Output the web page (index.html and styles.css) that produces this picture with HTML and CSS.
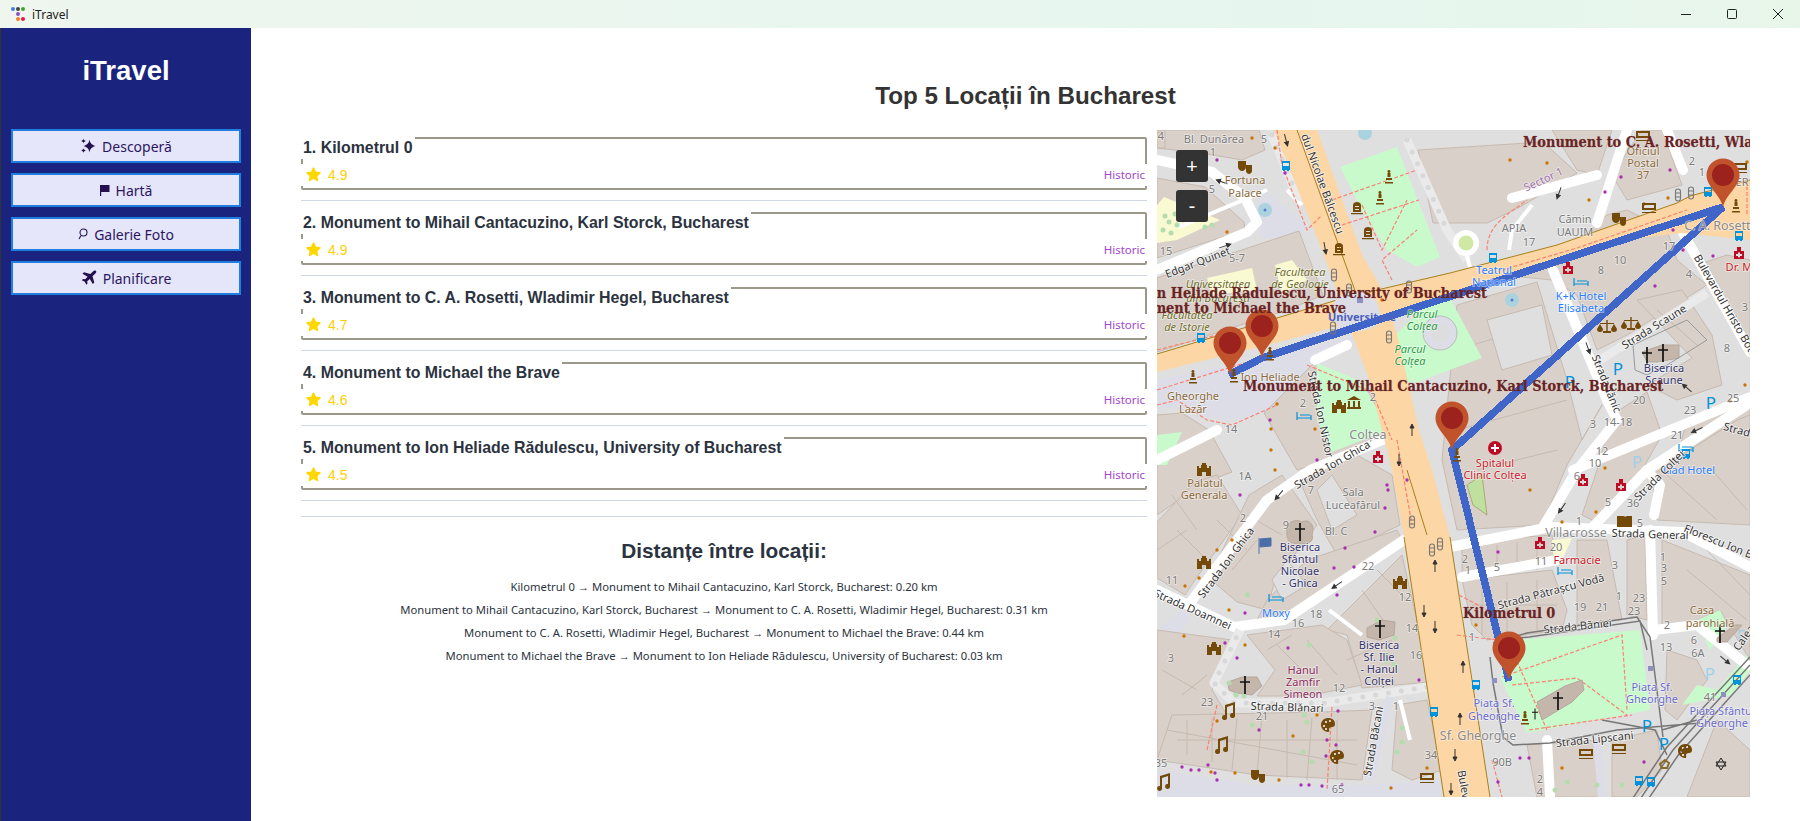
FILE: index.html
```html
<!DOCTYPE html>
<html lang="ro">
<head>
  <meta charset="UTF-8" />
  <meta name="viewport" content="width=device-width, initial-scale=1" />
  <title>iTravel</title>
  <link rel="stylesheet" href="styles.css">
</head>
<body>

<header class="titlebar">
  <svg class="app-icon" width="16" height="16" viewBox="0 0 16 16">
    <rect width="16" height="16" fill="#f4f4f4"/>
    <circle cx="3" cy="3" r="2" fill="#3a80e0"/>
    <circle cx="8" cy="3" r="2" fill="#444"/>
    <circle cx="13" cy="3" r="2" fill="#3aa820"/>
    <circle cx="8" cy="8" r="2" fill="#9050c0"/>
    <circle cx="8" cy="13" r="2" fill="#f08020"/>
    <circle cx="13" cy="13" r="2" fill="#e81840"/>
  </svg>
  <span class="app-name">iTravel</span>
  <div class="win-controls">
    <svg width="10" height="10" viewBox="0 0 10 10"><path d="M0 5.5h10" stroke="#222"/></svg>
    <svg width="10" height="10" viewBox="0 0 10 10"><rect x=".5" y=".5" width="9" height="9" rx="1" fill="none" stroke="#222"/></svg>
    <svg width="10" height="10" viewBox="0 0 10 10"><path d="M0 0l10 10M10 0L0 10" stroke="#222"/></svg>
  </div>
</header>

<div class="app">
  <aside class="sidebar">
    <h1>iTravel</h1>
    <nav class="side-nav">
      <button>
        <svg width="16" height="16" viewBox="0 0 16 16"><path d="M9.500 1.500c.6 3.500 1.800 5 5.800 6.500-4 1.500-5.200 3-5.800 6.500-.6-3.500-1.800-5-5.800-6.500 4-1.500 5.200-3 5.800-6.500zM3.500 .5c.2 1.400.8 2 2.300 2.500-1.500.5-2.100 1.100-2.300 2.500-.2-1.400-.8-2-2.300-2.500 1.500-.5 2.100-1.100 2.300-2.500zM3.500 10c.2 1.400.8 2 2.300 2.500-1.500.5-2.100 1.100-2.300 2.500-.2-1.400-.8-2-2.300-2.500 1.500-.5 2.100-1.100 2.300-2.500z" fill="#24104f"/></svg>
        Descoperă
      </button>
      <button>
        <svg width="10" height="12" viewBox="0 0 10 12"><path d="M0 1h9.500v7H1.200v4H0z" fill="#24104f"/></svg>
        Hartă
      </button>
      <button>
        <svg width="10" height="12" viewBox="0 0 10 12"><circle cx="5.500" cy="4.500" r="3.500" fill="none" stroke="#24104f" stroke-width="1.100"/><path d="M3 7.500L1 11" stroke="#24104f" stroke-width="1.100"/></svg>
        Galerie Foto
      </button>
      <button>
        <svg width="16" height="16" viewBox="0 0 16 16"><path d="M15 1c-1-.8-2.200-.4-3 .4L9.300 4 3 2.200 1.500 3.700 6.600 6.700 4.200 9.300 2 9 .8 10.200l3 1.500 1.500 3 1.200-1.200-.3-2.200 2.600-2.400 3 5.100 1.500-1.500L11.500 6.200l2.800-2.700c.8-.8 1.400-1.700.7-2.500z" fill="#24104f"/></svg>
        Planificare
      </button>
    </nav>
  </aside>

  <main class="main">
    <h2 class="page-title">Top 5 Locații în Bucharest</h2>
    <div class="content">
      <section class="left-col">
        <ul class="loc-list">
          <li class="loc-item">
            <div class="loc-card">
              <h3>1. Kilometrul 0</h3>
              <div class="loc-row">
                <span class="rating"><svg class="star" viewBox="0 0 16 16"><path d="M8 2l1.800 3.900 4.200.5-3.100 2.900.8 4.200L8 11.400l-3.700 2.100.8-4.200L2 6.400l4.200-.5z"/></svg>4.9</span>
                <span class="tag">Historic</span>
              </div>
            </div>
          </li>
          <li class="loc-item">
            <div class="loc-card">
              <h3>2. Monument to Mihail Cantacuzino, Karl Storck, Bucharest</h3>
              <div class="loc-row">
                <span class="rating"><svg class="star" viewBox="0 0 16 16"><path d="M8 2l1.800 3.900 4.200.5-3.100 2.900.8 4.200L8 11.400l-3.700 2.100.8-4.200L2 6.400l4.200-.5z"/></svg>4.9</span>
                <span class="tag">Historic</span>
              </div>
            </div>
          </li>
          <li class="loc-item">
            <div class="loc-card">
              <h3>3. Monument to C. A. Rosetti, Wladimir Hegel, Bucharest</h3>
              <div class="loc-row">
                <span class="rating"><svg class="star" viewBox="0 0 16 16"><path d="M8 2l1.800 3.900 4.200.5-3.100 2.900.8 4.200L8 11.400l-3.700 2.100.8-4.200L2 6.400l4.200-.5z"/></svg>4.7</span>
                <span class="tag">Historic</span>
              </div>
            </div>
          </li>
          <li class="loc-item">
            <div class="loc-card">
              <h3>4. Monument to Michael the Brave</h3>
              <div class="loc-row">
                <span class="rating"><svg class="star" viewBox="0 0 16 16"><path d="M8 2l1.800 3.900 4.200.5-3.100 2.900.8 4.200L8 11.400l-3.700 2.100.8-4.200L2 6.400l4.200-.5z"/></svg>4.6</span>
                <span class="tag">Historic</span>
              </div>
            </div>
          </li>
          <li class="loc-item">
            <div class="loc-card">
              <h3>5. Monument to Ion Heliade Rădulescu, University of Bucharest</h3>
              <div class="loc-row">
                <span class="rating"><svg class="star" viewBox="0 0 16 16"><path d="M8 2l1.800 3.900 4.200.5-3.100 2.900.8 4.200L8 11.400l-3.700 2.100.8-4.200L2 6.400l4.200-.5z"/></svg>4.5</span>
                <span class="tag">Historic</span>
              </div>
            </div>
          </li>
        </ul>
        <div class="distances">
          <h2>Distanțe între locații:</h2>
          <p>Kilometrul 0 → Monument to Mihail Cantacuzino, Karl Storck, Bucharest: 0.20 km</p>
          <p>Monument to Mihail Cantacuzino, Karl Storck, Bucharest → Monument to C. A. Rosetti, Wladimir Hegel, Bucharest: 0.31 km</p>
          <p>Monument to C. A. Rosetti, Wladimir Hegel, Bucharest → Monument to Michael the Brave: 0.44 km</p>
          <p>Monument to Michael the Brave → Monument to Ion Heliade Rădulescu, University of Bucharest: 0.03 km</p>
        </div>
      </section>

      <div class="map">
        <svg class="map-svg" width="593" height="667" viewBox="0 0 593 667">
          <defs>
            <g id="pin"><path d="M0 0C-3-13-16.500-20-16.500-32A16.500 16.500 0 1 1 16.500-32C16.500-20 3-13 0 0z" fill="#c1532c"/><circle cy="-32" r="11" fill="#9b221d"/></g>
            <path id="cross" d="M0-9V9M-5-3H5" stroke="#111" stroke-width="1.700" fill="none"/>
            <path id="castle" d="M-7 6V-4h2v2h2v-3h1v-2h4v2h1v3h2v-2h2V6H2V2h-4v4z" fill="#734a08"/>
            <path id="temple" d="M-7-3L0-7l7 4zM-6-2h2v6h-2zM-1-2h2v6h-2zM4-2h2v6H4zM-7 4H7v2H-7z" fill="#734a08"/>
            <path id="note" d="M-5 5a2.500 2.500 0 1 0 2 2V-3l6-2V3a2.500 2.500 0 1 0 2 2V-8l-10 3z" fill="#734a08"/>
            <path id="palette" fill-rule="evenodd" d="M0-7C-5-7-7-3-7 0s3 7 7 7c2 0 1-2 1-3s1-2 3-2 3-1 3-3c0-4-3-6-7-6zM-3-4h2v2h-2zM1-5h2v2H1zM-5 0h2v2h-2zM-3 3h2v2h-2z" fill="#734a08"/>
            <path id="masks" d="M-7-5H1v6c0 2-2 4-4 4S-7 3-7 1zM1-1H7V5C7 7 5 8 4 8S1 7 1 5z" fill="#734a08"/>
            <path id="money" d="M-7-4H7V3H-7zM-5-2v3H5v-3zM-7 5H7v1H-7z" fill="#734a08"/>
            <path id="bust" d="M0-7a1.500 1.500 0 1 1-.1 0zM-1.500-4h3v4h-3zM-3 1H3V3H-3zM-4 5H4V6.500H-4z" fill="#734a08"/>
            <path id="grave" d="M-4 4V-3C-4-5-2-6 0-6S4-5 4-3V4zM-2-2v1H2v-1zM-2 1v1H2V1zM-6 5H6V6.300H-6z" fill="#734a08"/>
            <path id="scales" d="M-.7-7H.7V4H4V6H-4V4H-.7zM-7-4H7v1H-7zM-7-3l-3 5a3 3 0 0 0 6 0zM7-3L4 2a3 3 0 0 0 6 0z" fill="#734a08"/>
            <path id="hotel" d="M-7-4V4M7-1V4M-7 2H7M-4-1H6" stroke="#0092da" stroke-width="1.200" fill="none"/>
            <path id="bus" d="M-4-5H4V4H3V5H1V4H-1V5H-3V4H-4zM-3-3V0H3V-3z" fill="#0092da"/>
            <path id="plus" d="M-5-2H-2V-6H2V-2H5V6H-5zM-1 -.500v1.500h-2v2h2v1.500h2V3H3V1H1v-1.500z" fill="#bd0a25"/>
            <g id="lights" fill="none" stroke="#777" stroke-width="1.100"><rect x="-2.500" y="-6" width="5" height="12" rx="2.500"/><path d="M-2.500-2h5M-2.500 2h5"/></g>
            <path id="arrow" d="M0 6V-2M-2-2H2L0 -6z" stroke="#333" fill="#333"/>
          </defs>

          <rect class="ground" width="593" height="667"/>

          <!-- площади и пешеходные зоны -->
          <path class="plaza" d="M0 250L120 225 200 205 160 240 125 270C105 290 70 295 45 285 30 280 10 275 0 280z"/>
          <path class="plaza" d="M0 640L100 655 215 655 287 650 300 667H0zM0 500L30 475 32 490 10 520 0 535z"/>
          <path class="plaza" d="M110 62L150 95 140 110 105 108 95 75z"/>

          <!-- кварталы -->
          <g class="bld">
            <path d="M8 0H102L108 20 85 30 50 24 0 18V0z"/>
            <path d="M0 48L48 57 87 92 88 100 0 128z"/>
            <path d="M0 148L142 101 166 165 130 180 0 222z"/>
            <path d="M0 285L25 283 52 300 75 342 48 352 0 385z"/>
            <path d="M107 283L157 233 213 263 233 310 140 340z"/>
            <path d="M0 392L38 352 60 345 85 385 40 447 28 465 0 448z"/>
            <path d="M92 365L125 345 160 395 118 450 110 480 80 472 52 448z"/>
            <path d="M140 345L200 325 235 345 243 395 180 425 160 390z"/>
            <path d="M150 430L240 400 245 410 195 440 130 485 100 490 110 470z"/>
            <path d="M170 500L245 425 262 500 272 552 205 558 190 505z"/>
            <path d="M0 500L75 510 55 560 70 585 20 590 0 630z"/>
            <path d="M90 505L165 495 190 510 205 555 150 566 100 566 118 540z"/>
            <path d="M15 585L165 582 215 580 205 650 100 645 0 630z"/>
            <path d="M240 575L270 570 285 640 255 650 235 640z"/>
            <path d="M261 20L386 12 420 43 363 77 330 93 276 93z"/>
            <path d="M395 0L455 0 440 45 420 40z"/>
            <path d="M485 0L505 0 525 55 470 70 455 45z"/>
            <path d="M345 145L390 125 405 125 450 85 470 80 510 100 520 130 550 155 470 205 440 220 420 165 395 150z"/>
            <path d="M300 175L380 152 410 250 425 310 445 275 410 335 385 395 300 400 285 330z"/>
            <path d="M540 135L570 125 593 130V215L570 175z"/>
            <path d="M530 290L593 275V385L540 380 505 385z"/>
            <path d="M480 170L525 160 555 205 565 255 520 270 490 255 535 228z"/>
            <path d="M455 285L490 262 505 305 485 340 445 395 425 385 440 340z"/>
            <path d="M495 345L525 325 580 290 593 285V395L500 390z"/>
            <path d="M305 412L395 405 400 430 305 445z"/>
            <path d="M305 450L395 440 410 480 405 500 330 510 315 495z"/>
            <path d="M420 410L450 410 465 490 420 495z"/>
            <path d="M470 410L488 405 490 490 470 485z"/>
            <path d="M505 410L593 445V530L563 480 540 490 505 500z"/>
            <path d="M510 520L540 530 550 550 520 590 508 580z"/>
            <path d="M560 590L593 620V667H530z"/>
            <path d="M370 615L440 610 445 667H380z"/>
            <path d="M455 610L500 600 505 640 480 667H455z"/>
            <path d="M0 3L8 0 8 18 0 18z"/>
          </g>
          <!-- внутренние линии домов -->
          <path class="bld-lines" d="M30 590V625M55 588V632M80 588L75 640M105 585L100 645M130 590V648M155 588L150 650M180 590V650M20 610H200M10 600L200 635M25 565L50 545M5 540L40 560M120 515L145 540M150 510L180 545M205 460L240 510M220 440L250 470M320 420V445M340 415V445M360 412V442M380 410V440M325 455V505M350 452V505M380 450V500M315 475H400M540 410L593 465M530 440L590 490M60 390L90 420M20 400L50 430M15 365L40 400M0 420L30 400M110 520L135 505M190 530L235 510M90 385L125 405M75 440L100 410M510 345L560 390M555 340L590 380M500 180L540 215M315 215L385 195M300 300L410 270M320 340L400 320"/>
          <path class="yard" d="M330 190L385 175 395 225 345 240z"/>
          <path class="yard" d="M160 360L175 345 200 385 175 400z"/>
          <path class="yard" d="M115 450L130 430 150 455 125 470z"/>
          <path class="pale" d="M7 67L63 90 20 110 0 113V75zM50 148L95 138 100 160 55 165zM118 135L135 130 150 150 125 165zM395 410L415 408 405 430 397 430z"/>

          <!-- парки -->
          <g class="park">
            <path d="M183 37L240 17 283 127 260 137 230 120 205 80z"/>
            <path d="M238 205L270 175 293 168 325 228 260 252 248 252z"/>
            <path d="M160 233L205 252 232 300 175 322 160 290z"/>
            <path d="M356 510L483 500 493 580 370 603 343 547z"/>
            <path d="M0 305L25 302 10 335 0 335zM540 490L563 480 570 495 553 520zM590 525L560 560 540 555 525 575 575 565 593 540z"/>
            <path d="M580 70L593 65V85L575 85z"/>
          </g>
          <path class="park-dark" d="M207 208L225 205 240 250 220 240zM185 130L200 145 202 150 185 160zM248 160L260 155 245 175zM310 355L325 345 330 385 316 375z"/>
          <circle cx="283" cy="203" r="17" class="ring"/>
          <circle cx="283" cy="203" r="9" fill="#ddd"/>

          <!-- улицы -->
          <g class="road">
            <path d="M0 30L55 42 88 68 100 92 90 102 0 140"/>
            <path d="M33 473L110 370 153 340 233 307"/>
            <path d="M0 460L77 497 127 490 247 410"/>
            <path d="M293 417L393 397 526 402 593 437"/>
            <path d="M526 103L593 222"/>
            <path d="M416 340L593 267"/>
            <path d="M436 397L490 340 593 273"/>
            <path d="M386 397L420 340 460 290"/>
            <path d="M396 140L450 270 460 290"/>
            <path d="M440 93L470 0"/>
            <path d="M510 0L526 40"/>
            <path d="M493 400L496 505"/>
            <path d="M497 385L503 355 490 340"/>
            <path d="M305 447L400 430"/>
            <path d="M355 68L440 45"/>
            <path d="M0 330L60 300"/>
            <path d="M158 230L190 215"/>
            <path d="M497 500L540 495 590 535"/>
            <path d="M390 610L393 667"/>
          </g>
          <path class="road-thin" d="M172 480L205 505M243 570L253 610M130 60L145 75M22 97L110 60M352 120L355 100 375 75"/>
          <g class="foot">
            <path d="M270 557L167 573 77 573 57 553 83 500"/>
            <path d="M443 230L550 163"/>
            <path d="M115 5L140 65 165 75M250 10L290 100 310 130"/>
          </g>
          <g class="foot-dots">
            <path d="M270 557L167 573 77 573 57 553 83 500"/>
            <path d="M115 5L140 65"/>
            <path d="M250 10L290 100"/>
          </g>
          <path class="lilac-road" d="M233 567L213 650M440 610L445 667"/>
          <circle cx="309" cy="113" r="13" fill="#fff"/>
          <circle cx="309" cy="113" r="7.500" fill="#cfe8a4"/>
          <path class="road-thin" d="M310 126L315 145"/>

          <!-- магистрали -->
          <path class="trunk-edge" d="M117 0L160 0 205 125 230 168 240 205 262 300 275 340 293 407 333 667H287L247 407 235 340 212 250 190 190 165 120z"/>
          <path class="trunk" d="M0 224L130 185 190 167 293 143 400 115 520 73 533 66 593 50V110L525 103 480 108 293 163 240 180 130 210 0 242z"/>
          <path class="trunk-line" d="M0 224L130 185 190 167 293 143 400 115 520 73 533 66 593 50M140 0L205 180M250 340L270 405M247 407L287 667M293 407L333 667"/>
          <path class="plaza" d="M175 180A18 14 0 0 1 222 180 22 14 0 0 1 178 192z"/>
          <rect x="200" y="167" width="6" height="6" fill="#8f8fc0"/>

          <!-- трамвайные пути -->
          <path class="rail" d="M333 527L336 553 346 607 356 615 393 613 460 600 543 593M336 513L370 503 480 487 493 507 506 607M340 510L372 507 483 491 490 520M476 668L510 617 593 527M484 668L516 620 593 535M492 668L522 624 593 545M445 590L498 600 510 625M505 600L540 590"/>

          <!-- пешеходные дорожки -->
          <path class="path" d="M175 70L260 40M185 95L262 70M205 75L225 120 240 90 250 70M235 150L225 130 260 100M0 220L80 200M0 260L130 220M120 0L125 35 150 100 165 85M345 140L420 118 530 80M330 120C330 95 350 85 370 70M0 275L20 270 50 290 75 295 120 275M150 235L215 262 235 310M345 547L465 505 470 580M355 555L420 548 470 585M372 600L475 585M355 520L390 600M302 465L340 485M300 505L340 510M590 50V85M335 630L345 667M240 310L255 395M60 575L50 620M175 577L170 660"/>

          <!-- церкви -->
          <path class="church" d="M130 402C128 393 138 388 145 392 153 388 158 396 155 405 158 412 148 416 142 413 134 415 129 410 130 402z"/>
          <path class="church" d="M210 498L225 490 238 492 237 505 222 510 210 507z"/>
          <path class="church" d="M71 552L85 547 100 547 105 556 95 565 80 563 72 560z"/>
          <path class="church" d="M380 572L408 556 425 550 427 560 415 572 385 590z"/>
          <path class="church" d="M485 222L505 215 522 215 522 228 500 232 490 232z"/>
          <path class="church" d="M560 508L578 495 585 495 570 512 560 512z"/>
          <path class="wall" d="M476 215L530 190 550 210 510 235 490 245 478 240z"/>

          <!-- точки -->
          <path class="dot-p" d="M60 30h0M128 43h0M113 290h0M160 330h0M83 365h0M188 418h0M250 350h0M230 355h0M231 360h0M228 378h0M218 402h0M177 438h0M88 483h0M197 437h0M180 465h0M68 513h0M80 528h0M131 518h0M102 600h0M181 581h0M170 610h0M179 615h0M169 626h0M185 655h0M144 655h0M152 655h0M165 656h0M60 650h0M25 637h0M34 640h0M42 640h0M51 635h0M58 643h0M262 550h0M341 422h0M363 628h0M372 628h0M341 652h0M487 632h0M464 47h0M513 40h0M448 62h0M526 120h0M556 126h0M498 156h0M421 125h0M516 100h0"/>
          <path class="dot-o" d="M95 8h0M118 18h0M70 102h0M225 170h0M120 274h0M114 299h0M158 299h0M114 320h0M118 340h0M164 340h0M75 410h0M60 420h0M42 448h0M28 456h0M72 480h0M88 515h0M27 506h0M60 591h0M136 606h0M160 585h0M54 642h0M78 643h0M178 628h0M209 642h0M234 658h0M122 650h0M270 638h0M405 392h0M373 360h0M439 382h0M319 495h0M448 338h0M339 633h0M405 638h0M588 255h0M573 271h0M590 32h0M511 68h0M487 74h0M432 70h0M390 33h0M353 30h0"/>
          <path class="dot-g" d="M12 92h0M20 95h0M6 100h0M14 103h0M55 95h0M48 97h0M26 90h0M8 86h0M18 84h0M90 465h0M220 490h0M238 508h0M152 515h0M147 585h0M150 592h0M95 595h0M72 553h0M79 565h0M87 566h0M146 622h0M155 632h0M245 598h0M245 612h0M240 622h0M229 531h0M237 535h0M228 525h0M398 660h0M410 652h0M440 655h0M465 655h0"/>

          <!-- маршрут -->
          <polyline class="route" points="352,551 295,320 566,77 105,228 72,245"/>

          <!-- значки -->
          <use href="#castle" x="47" y="340"/><use href="#castle" x="47" y="433"/><use href="#castle" x="57" y="519"/><use href="#castle" x="243" y="453"/><use href="#castle" x="182" y="277"/>
          <use href="#temple" x="197" y="273"/>
          <use href="#note" x="73" y="580"/><use href="#note" x="66" y="614"/><use href="#note" x="8" y="651"/>
          <use href="#palette" x="171" y="595"/><use href="#palette" x="180" y="627"/><use href="#palette" x="528" y="621"/>
          <use href="#masks" x="101" y="645"/><use href="#masks" x="462" y="88"/><use href="#masks" x="88" y="36"/>
          <use href="#money" x="270" y="647"/><use href="#money" x="492" y="77"/><use href="#money" x="429" y="623"/><use href="#money" x="462" y="618"/><use href="#money" x="583" y="37"/><use href="#money" x="486" y="5"/>
          <use href="#bust" x="232" y="47"/><use href="#bust" x="223" y="68"/><use href="#bust" x="36" y="247"/><use href="#bust" x="368" y="588"/><use href="#bust" x="579" y="76"/><use href="#bust" x="113" y="224"/><use href="#bust" x="77" y="246"/><use href="#bust" x="300" y="325"/>
          <use href="#grave" x="200" y="78"/><use href="#grave" x="211" y="103"/><use href="#grave" x="182" y="119"/>
          <use href="#scales" x="450" y="197"/><use href="#scales" x="474" y="194"/>
          <use href="#hotel" x="147" y="286"/><use href="#hotel" x="424" y="152"/><use href="#hotel" x="408" y="441"/><use href="#hotel" x="119" y="468"/><use href="#hotel" x="529" y="318"/>
          <use href="#bus" x="129" y="36"/><use href="#bus" x="44" y="208"/><use href="#bus" x="277" y="582"/><use href="#bus" x="319" y="555"/><use href="#bus" x="580" y="550"/><use href="#bus" x="482" y="651"/><use href="#bus" x="494" y="652"/><use href="#bus" x="336" y="128"/><use href="#bus" x="582" y="106"/><use href="#bus" x="551" y="62"/><use href="#bus" x="529" y="324"/>
          <use href="#plus" x="221" y="327"/><use href="#plus" x="411" y="138"/><use href="#plus" x="582" y="123"/><use href="#plus" x="383" y="413"/><use href="#plus" x="426" y="350"/><use href="#plus" x="464" y="355"/>
          <circle cx="338" cy="318" r="7" fill="#bd0a25"/><path d="M338 314v8M334 318h8" stroke="#fff" stroke-width="2"/>
          <path d="M460 386h6c2 0 2 1 2 1s1-1 2-1h5v11h-15z" fill="#734a08"/>
          <path d="M102 408V424M103 409l11-1v8l-11 1z" stroke="#4b6ea8" fill="#4b6ea8"/>
          <use href="#lights" x="177" y="145"/><use href="#lights" x="192" y="160"/><use href="#lights" x="252" y="157"/><use href="#lights" x="176" y="198"/><use href="#lights" x="232" y="207"/><use href="#lights" x="521" y="65"/><use href="#lights" x="534" y="63"/><use href="#lights" x="255" y="392"/><use href="#lights" x="275" y="420"/><use href="#lights" x="283" y="414"/>
          <use href="#arrow" transform="translate(129 10) rotate(165)"/><use href="#arrow" transform="translate(168 118) rotate(170)"/><use href="#arrow" x="255" y="300"/><use href="#arrow" transform="translate(242 330) rotate(180)"/><use href="#arrow" transform="translate(267 481) rotate(180)"/><use href="#arrow" transform="translate(278 497) rotate(180)"/><use href="#arrow" x="278" y="436"/><use href="#arrow" transform="translate(298 625) rotate(180)"/><use href="#arrow" transform="translate(294 659) rotate(180)"/><use href="#arrow" x="306" y="537"/><use href="#arrow" x="303" y="589"/><use href="#arrow" transform="translate(65 52) rotate(-70)"/><use href="#arrow" transform="translate(68 116) rotate(72)"/><use href="#arrow" transform="translate(122 365) rotate(-140)"/><use href="#arrow" transform="translate(180 455) rotate(-125)"/><use href="#arrow" transform="translate(402 63) rotate(200)"/><use href="#arrow" transform="translate(431 218) rotate(160)"/><use href="#arrow" transform="translate(530 258) rotate(-50)"/><use href="#arrow" transform="translate(540 300) rotate(-115)"/><use href="#arrow" transform="translate(405 378) rotate(-145)"/><use href="#arrow" transform="translate(568 530) rotate(130)"/>
          <use href="#cross" x="143" y="402"/><use href="#cross" x="223" y="499"/><use href="#cross" x="88" y="555"/><use href="#cross" x="401" y="571"/><use href="#cross" x="563" y="504"/><use href="#cross" x="490" y="226"/><use href="#cross" x="506" y="223"/><use href="#cross" transform="translate(378 584) scale(.6)"/>
          <path d="M564 628l5 8h-10zM564 640l5-8h-10z" fill="none" stroke="#222"/>
          <path d="M508 630l4 3-2 5h-5l-2-4z" fill="none" stroke="#8a6a2a" stroke-width="2"/>
          <text class="park-p" x="490" y="602">P</text><text class="park-p" x="507" y="620">P</text><text class="park-p" x="461" y="245">P</text><text class="park-p" x="554" y="279">P</text>
          <text class="park-p light" x="553" y="550">P</text><text class="park-p light" x="585" y="512">P</text><text class="park-p light" x="480" y="338">P</text><text class="park-p" x="413" y="258">P</text>
          <circle cx="355" cy="170" r="7" fill="#aad3df"/><circle cx="355" cy="170" r="1.500" fill="#5a7dd8"/>
          <circle cx="108" cy="80" r="7" fill="#aad3df"/><circle cx="108" cy="80" r="1.500" fill="#5a7dd8"/>
          <circle cx="208" cy="3" r="7" fill="#aad3df"/>
          <rect x="335" y="548" width="5" height="5" fill="#8f8fc0"/><rect x="491" y="536" width="5" height="5" fill="#8f8fc0"/><rect x="564" y="562" width="5" height="5" fill="#8f8fc0"/>

          <!-- подписи карты -->
          <g class="tx">
            <text x="57" y="13">Bl. Dunărea</text><text x="4" y="10">4</text><text x="107" y="13">5</text><text x="56" y="26">1</text><text x="55" y="63">5</text><text x="9" y="125">15</text><text x="80" y="132">5-7</text><text x="74" y="303">14</text><text x="146" y="277">2</text><text x="216" y="271">2</text>
            <text x="88" y="350">1A</text><text x="86" y="392">2</text><text x="129" y="399">9</text><text x="179" y="405">Bl. C</text><text x="196" y="366">Sala</text><text x="196" y="379">Luceafărul</text><text x="154" y="364">7</text><text x="211" y="440">22</text><text x="159" y="488">18</text><text x="141" y="497">16</text><text x="117" y="508">14</text><text x="15" y="454">11</text><text x="248" y="471">12</text><text x="255" y="502">14</text><text x="259" y="529">16</text><text x="182" y="562">12</text><text x="50" y="576">23</text><text x="105" y="590">21</text><text x="14" y="532">3</text><text x="215" y="580">3</text><text x="239" y="580">1</text><text x="4" y="637">35</text><text x="181" y="663">65</text><text x="274" y="629">34</text>
            <text x="399" y="421">20</text><text x="384" y="435">11</text><text x="308" y="433">2</text><text x="311" y="444">1</text><text x="340" y="441">5</text><text x="458" y="439">3</text><text x="506" y="431">1</text><text x="507" y="442">3</text><text x="507" y="455">5</text><text x="462" y="470">1</text><text x="482" y="472">23</text><text x="477" y="485">23</text><text x="423" y="481">19</text><text x="445" y="481">21</text><text x="510" y="499">2</text><text x="509" y="521">13</text><text x="537" y="514">6</text><text x="541" y="527">6A</text><text x="553" y="571">41</text><text x="315" y="511">1</text><text x="345" y="636">90B</text><text x="383" y="653">2</text><text x="383" y="666">4</text><text x="420" y="350">6</text><text x="451" y="376">5</text><text x="476" y="377">36</text><text x="422" y="395">1</text><text x="483" y="397">5</text>
            <text x="535" y="35">2</text><text x="545" y="46">1</text><text x="585" y="56">ER</text><text x="357" y="102">APIA</text><text x="372" y="116">17</text><text x="418" y="93">Cămin</text><text x="418" y="106">UAUIM</text><text x="463" y="134">10</text><text x="444" y="144">8</text><text x="532" y="148">4</text><text x="588" y="181">3</text><text x="512" y="120">17</text><text x="570" y="222">8</text><text x="482" y="274">20</text><text x="533" y="284">23</text><text x="576" y="272">25</text><text x="461" y="296">14-18</text><text x="436" y="298">3</text><text x="520" y="309">21</text><text x="445" y="325">12</text><text x="438" y="337">10</text>
            <text class="lg" x="211" y="309">Colțea</text><text class="lg" x="321" y="610">Sf. Gheorghe</text><text class="lg" x="419" y="407">Villacrosse</text><text class="lg" x="562" y="100">C. A. Rosetti</text>
          </g>
          <g class="tx brown">
            <text x="88" y="54">Fortuna</text><text x="88" y="67">Palace</text><text x="36" y="270">Gheorghe</text><text x="36" y="283">Lazăr</text><text x="113" y="251">Ion Heliade</text><text x="48" y="357">Palatul</text><text x="47" y="369">Generala</text><text x="486" y="25">Oficiul</text><text x="486" y="37">Poștal</text><text x="486" y="49">37</text><text x="545" y="484">Casa</text><text x="553" y="497">parohială</text>
          </g>
          <g class="tx olive">
            <text x="61" y="158">Universitatea</text><text x="61" y="172">din București</text><text x="143" y="146">Facultatea</text><text x="143" y="158">de Geologie</text><text x="30" y="189">Facultatea</text><text x="30" y="201">de Istorie</text>
          </g>
          <g class="tx parkname">
            <text x="265" y="188">Parcul</text><text x="265" y="200">Colțea</text><text x="253" y="223">Parcul</text><text x="253" y="235">Colțea</text>
          </g>
          <g class="tx church-name">
            <text x="143" y="421">Biserica</text><text x="143" y="433">Sfântul</text><text x="143" y="445">Nicolae</text><text x="143" y="457">- Ghica</text><text x="222" y="519">Biserica</text><text x="222" y="531">Sf. Ilie</text><text x="222" y="543">- Hanul</text><text x="222" y="555">Colței</text><text x="507" y="242">Biserica</text><text x="507" y="254">Scaune</text>
          </g>
          <g class="tx maroon"><text x="146" y="544">Hanul</text><text x="146" y="556">Zamfir</text><text x="146" y="568">Simeon</text></g>
          <g class="tx redname"><text x="338" y="337">Spitalul</text><text x="338" y="349">Clinic Colțea</text><text x="420" y="434">Farmacie</text><text x="585" y="141">Dr. Ma</text></g>
          <g class="tx bluename"><text x="119" y="487">Moxy</text><text x="337" y="144">Teatrul</text><text x="337" y="156">Național</text><text x="424" y="170">K+K Hotel</text><text x="424" y="182">Elisabeta</text><text x="532" y="344">Liad Hotel</text></g>
          <g class="tx stopname"><text x="495" y="561">Piața Sf.</text><text x="495" y="573">Gheorghe</text><text x="337" y="577">Piața Sf.</text><text x="337" y="590">Gheorghe</text><text x="565" y="585">Piața Sfântul</text><text x="565" y="597">Gheorghe</text></g>
          <text class="uni" x="171" y="191">Universitate</text>
          <text class="tx sector" transform="translate(388 53) rotate(-25)">Sector 1</text>
          <g class="tx street">
            <text transform="translate(42 136) rotate(-21)">Edgar Quinet</text>
            <text transform="translate(162 55) rotate(70)">dul Nicolae Bălcescu</text>
            <text transform="translate(160 285) rotate(78)">Strada Ion Nistor</text>
            <text transform="translate(177 338) rotate(-30)">Strada Ion Ghica</text>
            <text transform="translate(72 435) rotate(-53)">Strada Ion Ghica</text>
            <text transform="translate(34 483) rotate(24)">Strada Doamnei</text>
            <text transform="translate(130 581) rotate(2)">Strada Blănari</text>
            <text transform="translate(220 612) rotate(-80)">Strada Băcani</text>
            <text transform="translate(303 655) rotate(80)">Bulev</text>
            <text transform="translate(493 408) rotate(2)">Strada General</text>
            <text transform="translate(560 415) rotate(22)">Florescu Ion B</text>
            <text transform="translate(395 465) rotate(-15)">Strada Pătrașcu Vodă</text>
            <text transform="translate(421 500) rotate(-6)">Strada Băniei</text>
            <text transform="translate(438 613) rotate(-6)">Strada Lipscani</text>
            <text transform="translate(499 200) rotate(-32)">Strada Scaune</text>
            <text transform="translate(567 180) rotate(60)">Bulevardul Hristo Botev</text>
            <text transform="translate(446 255) rotate(68)">Strada Iănic</text>
            <text transform="translate(505 348) rotate(-45)">Strada Colței</text>
            <text transform="translate(585 305) rotate(15)">Strada I</text>
            <text transform="translate(590 510) rotate(-55)">Calea</text>
          </g>

          <!-- маркеры -->
          <use href="#pin" x="352" y="550"/><use href="#pin" x="295" y="320"/><use href="#pin" x="566" y="77"/><use href="#pin" x="105" y="228"/><use href="#pin" x="73" y="245"/>
          <text class="marker-label" x="86" y="261">Monument to Mihail Cantacuzino, Karl Storck, Bucharest</text>
          <text class="marker-label" x="366" y="17">Monument to C. A. Rosetti, Wladimir Hegel, Bucharest</text>
          <text class="marker-label end" x="330" y="168">Monument to Ion Heliade Rădulescu, University of Bucharest</text>
          <text class="marker-label end" x="189" y="183">Monument to Michael the Brave</text>
          <text class="marker-label" x="306" y="488">Kilometrul 0</text>
        </svg>
        <div class="zoom-ctl">
          <button>+</button>
          <button>-</button>
        </div>
      </div>
    </div>
  </main>
</div>

</body>
</html>
```

FILE: styles.css
```css
* {
  box-sizing: border-box;
}
html, body {
  height: 100%;
}
body {
  margin: 0;
  overflow: hidden;
  font-family: "Noto Sans", sans-serif;
  background-color: white;
}

/* заголовок окна */
.titlebar {
  display: flex;
  align-items: center;
  height: 28px;
  padding-left: 10px;
  background: linear-gradient(90deg, #eef6ee, #e6f6ef 70%, #e8f6ea);
}
.app-icon {
  margin-right: 6px;
}
.app-name {
  font-size: 12px;
  color: #222;
}
.win-controls {
  display: flex;
  gap: 36px;
  margin-left: auto;
  padding-right: 17px;
}

.app {
  display: flex;
  height: 793px;
  border-left: 1px solid #333;
}

/* боковая панель */
.sidebar {
  flex: 0 0 250px;
  padding: 0 10px;
  background-color: #1a237e;
}
.sidebar h1 {
  margin: 0;
  padding-top: 27px;
  height: 101px;
  font: bold 27.5px/32px "Liberation Sans", sans-serif;
  color: white;
  text-align: center;
}
.side-nav {
  display: flex;
  flex-direction: column;
  gap: 10px;
}
.side-nav button {
  display: flex;
  align-items: center;
  justify-content: center;
  gap: 6px;
  height: 34px;
  border: 2px solid #1e7fe0;
  background-color: #e6e6fa;
  color: #2b1660;
  font-family: "Noto Sans", sans-serif;
  font-size: 14px;
}

/* основная часть */
.main {
  flex: 1;
  padding: 0 50px;
}
.page-title {
  margin: 0;
  height: 102px;
  padding-top: 52px;
  font: bold 24.2px/31px "Liberation Sans", sans-serif;
  color: #333;
  text-align: center;
}
.content {
  display: flex;
  gap: 10px;
}
.left-col {
  flex: 1;
}

.loc-list {
  list-style: none;
  margin: 0;
  padding: 0;
}
.loc-item {
  padding: 11px 0 10px;
  border-bottom: 1px solid #d0d7e2;
}
.loc-item:first-child {
  padding-top: 7px;
}
.loc-card {
  height: 53px;
  border: 2px solid #9b978b;
  border-radius: 2px;
}
.loc-card h3 {
  display: table;
  height: 22px;
  margin: -2px 0 0 -2px;
  padding: 1px 2px 0;
  background-color: white;
  font: bold 15.9px/20px "Liberation Sans", sans-serif;
  color: #2c3340;
}
.loc-row {
  display: flex;
  justify-content: space-between;
  align-items: center;
  height: 22px;
  margin: 5px -2px 0;
  padding: 0 2px 1px 4px;
  background-color: white;
}
.rating {
  display: flex;
  align-items: center;
  gap: 6px;
  font-family: "Liberation Sans", sans-serif;
  font-size: 14px;
  color: #ffd000;
}
.star {
  width: 17px;
  height: 17px;
  fill: #ffd700;
  stroke: #ffd700;
  stroke-width: 1.5;
  stroke-linejoin: round;
}
.tag {
  font-size: 11.5px;
  color: #a246cc;
}

.distances {
  margin-top: 15px;
  padding-top: 20px;
  border-top: 1px solid #d0d7e2;
  text-align: center;
}
.distances h2 {
  margin: 0 0 10px;
  font: bold 20.8px/28px "Liberation Sans", sans-serif;
  color: #2c3340;
}
.distances p {
  margin: 0;
  font-size: 11.28px;
  line-height: 23px;
  color: #2c3340;
}

/* карта */
.map {
  position: relative;
  flex: 0 0 593px;
  height: 667px;
  overflow: hidden;
}
.map-svg {
  display: block;
}
.zoom-ctl {
  position: absolute;
  top: 20px;
  left: 19px;
  display: flex;
  flex-direction: column;
  gap: 8px;
}
.zoom-ctl button {
  width: 32px;
  height: 32px;
  padding: 0;
  border: none;
  border-radius: 3px;
  background-color: #333;
  color: white;
  font: 20px/32px "Noto Sans", sans-serif;
}

.ground { fill: #e0dfdf; }
.plaza { fill: #dddde8; }
.bld path { fill: #d9d0c9; stroke: #c6bab0; stroke-width: 1; }
.bld-lines { fill: none; stroke: #c6bab0; stroke-width: 1; }
.yard { fill: #e0dfdf; stroke: #c6bab0; }
.pale { fill: #fafad2; }
.park path { fill: #c8facc; }
.park-dark { fill: #c0e0a0; stroke: #8a7a30; stroke-width: .5; }
.ring { fill: #dddde8; stroke: #bbb; }
.road path { fill: none; stroke: white; stroke-width: 10; stroke-linecap: round; stroke-linejoin: round; }
.road-thin { fill: none; stroke: white; stroke-width: 4; }
.foot path { fill: none; stroke: #eaeaea; stroke-width: 9; stroke-linejoin: round; }
.foot-dots path { fill: none; stroke: #d8d8d8; stroke-width: 5; stroke-linecap: round; stroke-dasharray: 0 13; }
.lilac-road { fill: none; stroke: #dddde8; stroke-width: 8; }
.trunk-edge, .trunk { fill: #fcd6a4; }
.trunk-line { fill: none; stroke: #a8801a; stroke-width: 1; }
.rail { fill: none; stroke: #777; stroke-width: 1.5; }
.path { fill: none; stroke: #fa8072; stroke-width: 1.2; stroke-dasharray: 4 2; }
.church { fill: #c4b6ab; stroke: #b5a79b; }
.wall { fill: none; stroke: #999; }
.dot-p { fill: none; stroke: #a82fb0; stroke-width: 3.4; stroke-linecap: round; }
.dot-o { fill: none; stroke: #c77400; stroke-width: 3.4; stroke-linecap: round; }
.dot-g { fill: none; stroke: #b5dcae; stroke-width: 5; stroke-linecap: round; }
.route { fill: none; stroke: #4065c8; stroke-width: 7.5; shape-rendering: crispEdges; }

.tx text, text.tx {
  font-family: "Noto Sans", sans-serif;
  font-size: 11px;
  text-anchor: middle;
  fill: #7a7a7a;
  paint-order: stroke;
  stroke: rgba(255, 255, 255, .55);
  stroke-width: 1.5px;
}
.tx .lg { font-size: 12.5px; fill: #8a8a8a; }
.tx.brown text { fill: #8a6a3a; }
.tx.olive text { fill: #6f6f2c; font-style: italic; }
.tx.parkname text { fill: #2a9a45; font-style: italic; }
.tx.church-name text { fill: #33336d; }
.tx.maroon text { fill: #8a2b5c; }
.tx.redname text { fill: #c81a2a; }
.tx.bluename text { fill: #2a7fff; }
.tx.stopname text { fill: #6a6ac8; }
.tx.street text { fill: #333; stroke: rgba(255, 255, 255, .8); }
text.sector { fill: #9a70a8; }
.uni {
  font: bold 11px "Noto Sans", sans-serif;
  fill: #4a62c0;
}
.park-p {
  font: 17px "Noto Sans", sans-serif;
  text-anchor: middle;
  fill: #0092da;
}
.park-p.light { fill: #a0cfe8; }
.marker-label {
  font-family: "DejaVu Serif", serif;
  font-size: 14.4px;
  font-weight: bold;
  font-stretch: condensed;
  fill: #6b2222;
  paint-order: stroke;
  stroke: rgba(60, 20, 20, .25);
  stroke-width: .6px;
}
.marker-label.end { text-anchor: end; }
```
